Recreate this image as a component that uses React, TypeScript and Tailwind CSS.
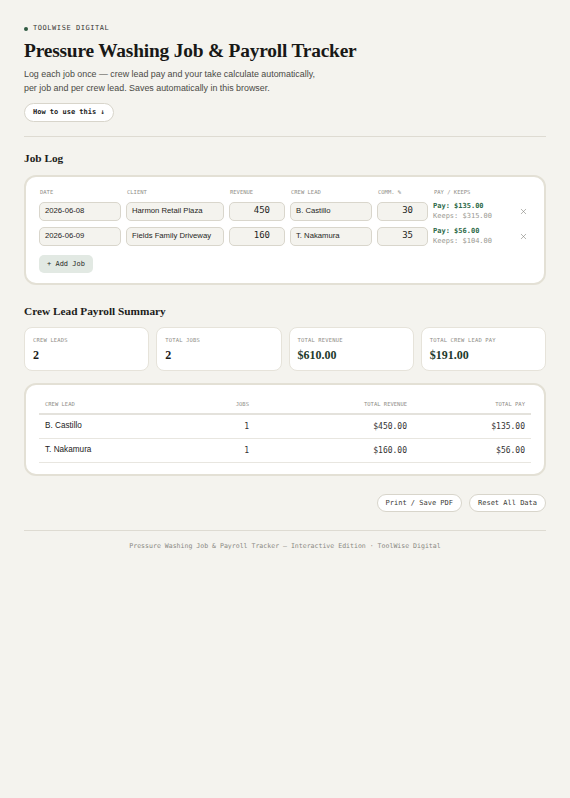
import { X } from "lucide-react";

const mono = "font-['DejaVu_Sans_Mono',monospace]";
const serif = "font-['Liberation_Serif',serif]";
const sans = "font-['Liberation_Sans',Arial,sans-serif]";

const jobs = [
  { date: "2026-06-08", client: "Harmon Retail Plaza", revenue: 450, lead: "B. Castillo", pct: 30 },
  { date: "2026-06-09", client: "Fields Family Driveway", revenue: 160, lead: "T. Nakamura", pct: 35 },
];

const money = (n: number) => "$" + n.toFixed(2);
const cols = "grid grid-cols-[82px_98px_56px_82px_51px_1fr_16px] gap-x-[5px]";

export default function App() {
  const totalRevenue = jobs.reduce((s, j) => s + j.revenue, 0);
  const totalPay = jobs.reduce((s, j) => s + (j.revenue * j.pct) / 100, 0);

  return (
    <div className="min-h-[798px] bg-[#f4f3ee] px-[24px] pt-[23px] pb-10 text-[#1c1c1a]">
      {/* header */}
      <div className={`flex h-[11px] items-center gap-[5px] ${mono} text-[7px] tracking-[0.08em] text-[#3a3a36]`}>
        <span className="h-[4px] w-[4px] rounded-full bg-[#2f5a41]" />
        TOOLWISE DIGITAL
      </div>
      <h1 className={`${serif} mt-[5px] text-[19.4px] font-bold leading-[24px] tracking-[-0.01em] text-[#181816]`}>
        Pressure Washing Job &amp; Payroll Tracker
      </h1>
      <p className={`${sans} mt-[4px] text-[8.9px] leading-[14px] text-[#4a4a45]`}>
        Log each job once — crew lead pay and your take calculate automatically,
        <br />
        per job and per crew lead. Saves automatically in this browser.
      </p>
      <button
        type="button"
        className={`${mono} mt-[8px] block h-[19px] rounded-full border border-[#d8d5cb] bg-white px-[8px] text-[7px] font-bold text-[#222]`}
      >
        How to use this ↓
      </button>
      <div className="mt-[14px] h-px bg-[#dedbd2]" />

      {/* job log */}
      <h2 className={`${serif} mt-[13px] text-[11.3px] font-bold leading-[16px]`}>Job Log</h2>
      <div className="mt-[9px] rounded-[12px] border-2 border-[#e3e0d5] bg-white px-[13px] pt-[10px] pb-[10px]">
        <div className={cols}>
          {["DATE", "CLIENT", "REVENUE", "CREW LEAD", "COMM. %", "PAY / KEEPS", ""].map((h, i) => (
            <div key={i} className={`${mono} pl-[1px] text-[5.5px] leading-[10px] text-[#8f8e88]`}>
              {h}
            </div>
          ))}
        </div>
        <div className="mt-[4px] flex flex-col gap-[5px]">
          {jobs.map((j) => {
            const pay = (j.revenue * j.pct) / 100;
            return (
              <div key={j.date} className={`${cols} items-center`}>
                <Field value={j.date} />
                <Field value={j.client} />
                <Field value={String(j.revenue)} num />
                <Field value={j.lead} />
                <Field value={String(j.pct)} num />
                <div className={`${mono} text-[7px] leading-[10px]`}>
                  <div className="font-bold text-[#2d6a48]">Pay: {money(pay)}</div>
                  <div className="text-[#9a9992]">Keeps: {money(j.revenue - pay)}</div>
                </div>
                <div className="flex justify-center text-[#7d7c76]">
                  <X size={9} strokeWidth={1.5} />
                </div>
              </div>
            );
          })}
        </div>
        <button
          type="button"
          className={`${mono} mt-[9px] block h-[18px] rounded-[5px] bg-[#e2e9e3] px-[8px] text-[7px] text-[#2b2b28]`}
        >
          + Add Job
        </button>
      </div>

      {/* summary */}
      <h2 className={`${serif} mt-[18px] text-[11.3px] font-bold leading-[16px]`}>Crew Lead Payroll Summary</h2>
      <div className="mt-[8px] grid grid-cols-4 gap-[7px]">
        <Stat label="CREW LEADS" value="2" />
        <Stat label="TOTAL JOBS" value={String(jobs.length)} />
        <Stat label="TOTAL REVENUE" value={money(totalRevenue)} green />
        <Stat label="TOTAL CREW LEAD PAY" value={money(totalPay)} green />
      </div>

      <div className="mt-[12px] rounded-[12px] border-2 border-[#e3e0d5] bg-white px-[13px] pt-[14px] pb-[11px]">
        <div className={`${mono} grid grid-cols-[150px_66px_158px_1fr] border-b-2 border-[#e4e2dc] pb-[4px] text-[5.5px] leading-[10px] text-[#8f8e88]`}>
          <div className="px-[6px]">CREW LEAD</div>
          <div className="px-[6px] text-right">JOBS</div>
          <div className="px-[6px] text-right">TOTAL REVENUE</div>
          <div className="px-[6px] text-right">TOTAL PAY</div>
        </div>
        {jobs.map((j) => (
          <div
            key={j.lead}
            className="grid h-[24px] grid-cols-[150px_66px_158px_1fr] items-center border-b border-[#e8e6e0]"
          >
            <div className={`${sans} px-[6px] text-[8.2px] text-[#222]`}>{j.lead}</div>
            <div className={`${mono} px-[6px] text-right text-[8px] text-[#333]`}>1</div>
            <div className={`${mono} px-[6px] text-right text-[8px] text-[#333]`}>{money(j.revenue)}</div>
            <div className={`${mono} px-[6px] text-right text-[8px] text-[#333]`}>
              {money((j.revenue * j.pct) / 100)}
            </div>
          </div>
        ))}
      </div>

      <div className="mt-[18px] flex justify-end gap-[7px]">
        {["Print / Save PDF", "Reset All Data"].map((b) => (
          <button
            key={b}
            type="button"
            className={`${mono} h-[18px] rounded-full border border-[#d8d5cb] bg-white px-[8px] text-[7px] text-[#3a3a36]`}
          >
            {b}
          </button>
        ))}
      </div>
      <div className="mt-[18px] h-px bg-[#dedbd2]" />
      <p className={`${mono} mt-[10px] text-center text-[6.55px] leading-[10px] text-[#8a8983]`}>
        Pressure Washing Job &amp; Payroll Tracker — Interactive Edition · ToolWise Digital
      </p>
    </div>
  );
}

function Field({ value, num }: { value: string; num?: boolean }) {
  return (
    <div
      className={[
        "flex h-[19px] items-center rounded-[5px] border border-[#d9d6cc] bg-[#f4f3ee] text-[#1f1f1c]",
        num ? `${mono} justify-end pr-[14px] text-[9px]` : `${sans} px-[5px] text-[7.7px]`,
      ].join(" ")}
    >
      {value}
    </div>
  );
}

function Stat({ label, value, green }: { label: string; value: string; green?: boolean }) {
  return (
    <div className="h-[44px] rounded-[8px] border border-[#e6e3da] bg-white px-[8px] pt-[8px]">
      <div className={`${mono} text-[5.5px] leading-[8px] tracking-[0.03em] text-[#8f8e88]`}>{label}</div>
      <div
        className={`${serif} mt-[3px] text-[12px] font-bold leading-[16px] ${green ? "text-[#1e3a2c]" : "text-[#1c1c1a]"}`}
      >
        {value}
      </div>
    </div>
  );
}
